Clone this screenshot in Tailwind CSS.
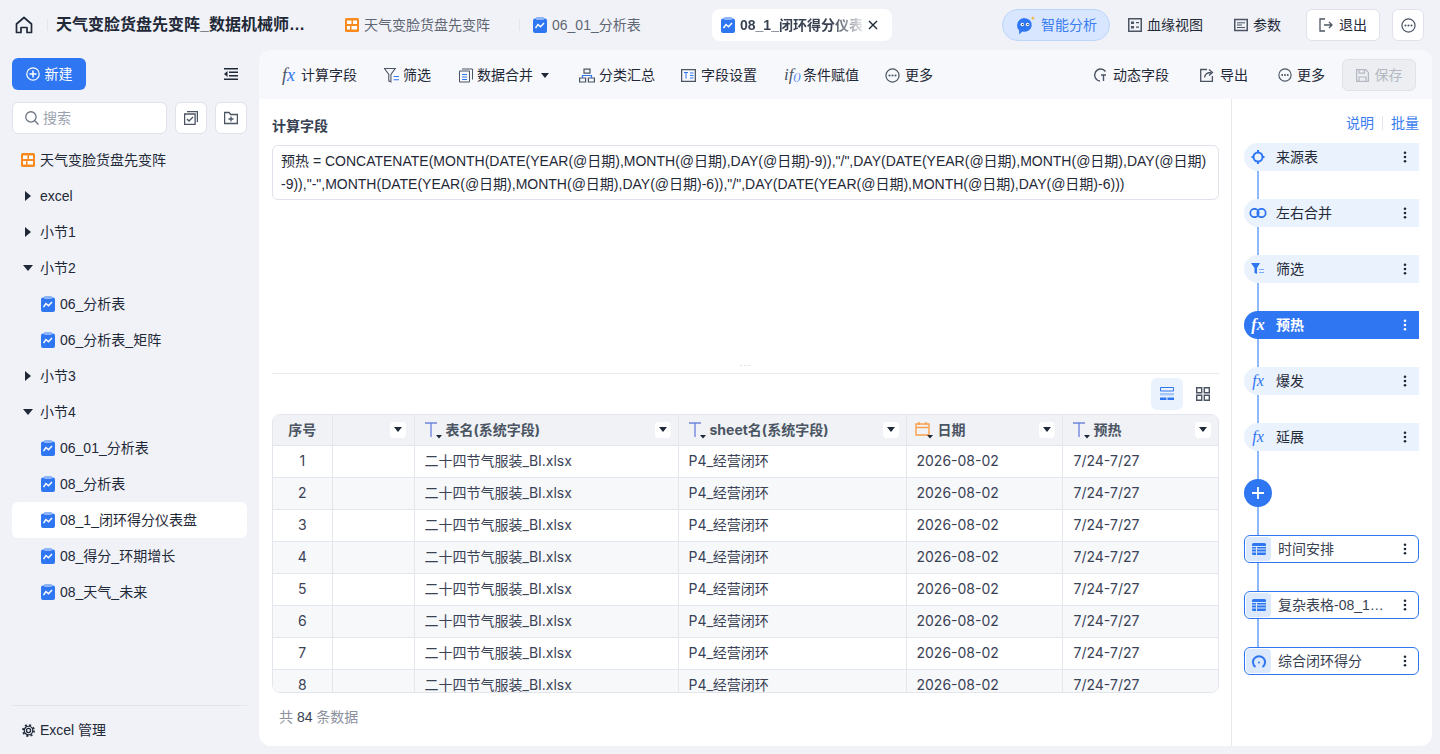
<!DOCTYPE html>
<html lang="zh-CN">
<head>
  <meta charset="UTF-8"/>
  <title>闭环得分仪表盘</title>
  <script src="https://cdn.jsdelivr.net/npm/@tailwindcss/browser@4"></script>
</head>
<body class="h-[754px] w-[1440px] overflow-hidden bg-[#f0f2f8] text-[14px] text-[#1f2937] [font-family:'Liberation_Sans','Noto_Sans_CJK_SC',sans-serif]">

<!-- shared icons -->
<svg class="hidden">
  <symbol id="report" viewBox="0 0 14 16">
    <rect x="0" y="1.500" width="14" height="14.500" rx="2" fill="#2f76f2"/>
    <rect x="3" y="0" width="8" height="3" rx="1" fill="#8db5f7"/>
    <path d="M2.500 11 5 7.500l2.500 2.200L11 6" fill="none" stroke="#fff" stroke-width="1.500"/>
  </symbol>
  <symbol id="dash" viewBox="0 0 14 14">
    <rect width="14" height="14" rx="1.500" fill="#f98a1e"/>
    <path d="M2 2.500h4.500V6H2zM8 2.500h4V6H8zM2 8h3v3.500H2zM6.500 8H12v3.500H6.500z" fill="#fff"/>
  </symbol>
  <symbol id="dots" viewBox="0 0 16 16">
    <circle cx="8" cy="8" r="7" fill="none" stroke="currentColor" stroke-width="1.300"/>
    <circle cx="4.800" cy="8" r="1.100" fill="currentColor"/><circle cx="8" cy="8" r="1.100" fill="currentColor"/><circle cx="11.200" cy="8" r="1.100" fill="currentColor"/>
  </symbol>
  <symbol id="kebab" viewBox="0 0 4 14">
    <circle cx="2" cy="2" r="1.500" fill="currentColor"/><circle cx="2" cy="7" r="1.500" fill="currentColor"/><circle cx="2" cy="12" r="1.500" fill="currentColor"/>
  </symbol>
  <symbol id="sheet" viewBox="0 0 14 12">
    <path d="M0 1.500A1.500 1.500 0 0 1 1.500 0h11A1.500 1.500 0 0 1 14 1.500V3H0zM0 4h4v1.600H0zM5 4h9v1.600H5zM0 6.600h4v1.900H0zM5 6.600h9v1.900H5zM0 9.400h4V12H1.500A1.500 1.500 0 0 1 0 10.500zM5 9.400h9v1.100a1.500 1.500 0 0 1-1.500 1.500H5z" fill="#2f76f2"/>
  </symbol>
  <symbol id="typeT" viewBox="0 0 20 18">
    <path d="M1 2h12M7 2v14" fill="none" stroke="#6f86e0" stroke-width="1.400"/>
    <path d="M12 14h6l-3 3.500z" fill="#1f2937"/>
  </symbol>
</svg>

<!-- top bar -->
<header class="flex h-[50px] items-center">
  <div class="flex w-[47px] justify-center pl-[1px]">
    <svg class="h-[18px] w-[18px] text-[#1f2937]" viewBox="0 0 18 18" fill="none" stroke="currentColor" stroke-width="1.700"><path d="M1.500 8 9 1.500 16.500 8v8.500h-4.500v-5H6v5H1.500z" stroke-linejoin="round"/></svg>
  </div>
  <div class="h-[12px] w-px bg-[#e2e5ee]"></div>
  <h1 class="ml-2 w-[250px] truncate text-[16px] font-bold text-[#1f2937]">天气变脸货盘先变阵_数据机械师分析看板</h1>
  <div class="ml-[39px] flex w-[160px] items-center gap-[5px] text-[#5f6673]">
    <svg class="h-[14px] w-[14px]"><use href="#dash"/></svg><span>天气变脸货盘先变阵</span>
  </div>
  <div class="ml-[14px] h-[12px] w-px bg-[#e2e5ee]"></div>
  <div class="ml-[13px] flex w-[179px] items-center gap-[5px] text-[#5f6673]">
    <svg class="h-[16px] w-[14px]"><use href="#report"/></svg><span>06_01_分析表</span>
  </div>
  <div class="flex h-8 w-[180px] items-center rounded-lg bg-white pl-[9px]">
    <svg class="h-[16px] w-[14px] shrink-0"><use href="#report"/></svg>
    <span class="ml-[5px] w-[122px] overflow-hidden whitespace-nowrap bg-gradient-to-r from-[#374151] from-75% to-[#37415122] bg-clip-text font-bold text-transparent">08_1_闭环得分仪表盘</span>
    <svg class="ml-[6px] h-[10px] w-[10px] text-[#1f2937]" viewBox="0 0 10 10" stroke="currentColor" stroke-width="1.400"><path d="m1 1 8 8M9 1 1 9"/></svg>
  </div>
  <div class="ml-[110px] flex h-8 w-[108px] items-center rounded-full border border-[#bcd5fb] bg-[#d8e7ff] pl-[13px] text-[#3b7cf0]">
    <svg class="h-[20px] w-[20px] shrink-0" viewBox="1 0 19 19"><path d="M2 9.500a7 6.500 0 1 1 5 6.200L4 18.500v-3.700A6.500 6.500 0 0 1 2 9.500z" fill="#2f76f2"/><circle cx="7" cy="9" r="1.700" fill="#fff"/><circle cx="12" cy="9" r="1.700" fill="#fff"/><circle cx="7.300" cy="9" r=".7" fill="#1f2937"/><circle cx="12.300" cy="9" r=".7" fill="#1f2937"/><path d="m17 1 .6 1.400L19 3l-1.400.6L17 5l-.6-1.400L15 3l1.400-.6z" fill="#f9b233"/></svg>
    <span class="ml-[5px]">智能分析</span>
  </div>
  <div class="ml-[18px] flex items-center gap-[5px]">
    <svg class="h-[14px] w-[14px] text-[#4b5563]" viewBox="0 0 14 14"><path d="M.75.750h12.500v12.500H.75z" fill="none" stroke="currentColor" stroke-width="1.500"/><path d="M3 3.500h3v2.500H3zM8 4h3v1.200H8zM3 8h3v2.500H3zM8 8.500h3v1.200H8z" fill="currentColor"/></svg>
    <span>血缘视图</span>
  </div>
  <div class="ml-[31px] flex items-center gap-[5px]">
    <svg class="h-[14px] w-[14px] text-[#4b5563]" viewBox="0 0 14 14"><path d="M.75 1.500h12.500v11H.75z" fill="none" stroke="currentColor" stroke-width="1.500"/><path d="M3 4.800h8M3 7h5M3 9.500h8" stroke="currentColor"/></svg>
    <span>参数</span>
  </div>
  <button class="ml-[25px] flex h-8 w-[74px] items-center justify-center gap-[6px] rounded-md border border-[#dfe2ea] bg-white">
    <svg class="h-[14px] w-[14px] text-[#4b5563]" viewBox="0 0 14 14" fill="none" stroke="currentColor" stroke-width="1.300"><path d="M6 1H1v12h5M5 7h8M10 4l3 3-3 3"/></svg>
    <span>退出</span>
  </button>
  <button class="ml-3 flex h-8 w-8 items-center justify-center rounded-md border border-[#dfe2ea] bg-white text-[#4b5563]">
    <svg class="h-[15px] w-[15px]"><use href="#dots"/></svg>
  </button>
</header>

<div class="flex h-[696px]">
  <!-- tree sidebar -->
  <aside class="flex w-[259px] flex-col px-3 pt-2">
    <div class="flex h-8 items-center justify-between">
      <button class="flex h-8 w-[74px] items-center justify-center gap-[5px] rounded-md bg-[#2f76f2] text-white">
        <svg class="h-[14px] w-[14px]" viewBox="0 0 14 14" fill="none" stroke="currentColor" stroke-width="1.200"><circle cx="7" cy="7" r="6.200"/><path d="M7 3.500v7M3.500 7h7" stroke-width="1.500"/></svg>
        新建
      </button>
      <svg class="mr-[9px] h-[12px] w-[14px] text-[#1f2937]" viewBox="0 0 14 12" fill="currentColor"><path d="M0 0h14v1.500H0zM5 3.500h9V5H5zM5 7h9v1.500H5zM0 10.500h14V12H0zM3.500 3v6L0 6z"/></svg>
    </div>
    <div class="mt-3 flex h-8 gap-2">
      <div class="flex w-[155px] items-center gap-[4px] rounded-md border border-[#dfe2ea] bg-white pl-[12px] text-[#9ca3af]">
        <svg class="h-[14px] w-[14px] text-[#6b7280]" viewBox="0 0 13 13" fill="none" stroke="currentColor" stroke-width="1.200"><circle cx="5.500" cy="5.500" r="4.800"/><path d="m9 9 3.500 3.500"/></svg>
        搜索
      </div>
      <button class="flex h-8 w-8 items-center justify-center rounded-md border border-[#dfe2ea] bg-white text-[#4b5563]">
        <svg class="h-[14px] w-[14px]" viewBox="0 0 14 14" fill="none" stroke="currentColor" stroke-width="1.300"><path d="M.6 3h10.500v10.400H.6zM3 .6h10.400V11"/><path d="m3 8 2 2 4-4"/></svg>
      </button>
      <button class="flex h-8 w-8 items-center justify-center rounded-md border border-[#dfe2ea] bg-white text-[#4b5563]">
        <svg class="h-[14px] w-[14px]" viewBox="0 0 14 14" fill="none" stroke="currentColor" stroke-width="1.300"><path d="M.6 1.500h4.500l1.500 2h6.800v9H.6zM7 5.500v5M4.500 8h5"/></svg>
      </button>
    </div>
    <nav class="mt-2 flex-1">
      <div class="flex h-9 items-center gap-[5px] pl-[9px]"><svg class="h-[14px] w-[14px]"><use href="#dash"/></svg>天气变脸货盘先变阵</div>
      <div class="flex h-9 items-center pl-[13px]"><span class="border-y-[5px] border-l-[6px] border-y-transparent border-l-[#1f2937]"></span><span class="ml-[9px]">excel</span></div>
      <div class="flex h-9 items-center pl-[13px]"><span class="border-y-[5px] border-l-[6px] border-y-transparent border-l-[#1f2937]"></span><span class="ml-[9px]">小节1</span></div>
      <div class="flex h-9 items-center pl-[11px]"><span class="border-x-[5px] border-t-[6px] border-x-transparent border-t-[#1f2937]"></span><span class="ml-[7px]">小节2</span></div>
      <div class="flex h-9 items-center gap-[5px] pl-[29px]"><svg class="h-[16px] w-[14px]"><use href="#report"/></svg>06_分析表</div>
      <div class="flex h-9 items-center gap-[5px] pl-[29px]"><svg class="h-[16px] w-[14px]"><use href="#report"/></svg>06_分析表_矩阵</div>
      <div class="flex h-9 items-center pl-[13px]"><span class="border-y-[5px] border-l-[6px] border-y-transparent border-l-[#1f2937]"></span><span class="ml-[9px]">小节3</span></div>
      <div class="flex h-9 items-center pl-[11px]"><span class="border-x-[5px] border-t-[6px] border-x-transparent border-t-[#1f2937]"></span><span class="ml-[7px]">小节4</span></div>
      <div class="flex h-9 items-center gap-[5px] pl-[29px]"><svg class="h-[16px] w-[14px]"><use href="#report"/></svg>06_01_分析表</div>
      <div class="flex h-9 items-center gap-[5px] pl-[29px]"><svg class="h-[16px] w-[14px]"><use href="#report"/></svg>08_分析表</div>
      <div class="flex h-9 items-center gap-[5px] rounded-md bg-white pl-[29px]"><svg class="h-[16px] w-[14px]"><use href="#report"/></svg>08_1_闭环得分仪表盘</div>
      <div class="flex h-9 items-center gap-[5px] pl-[29px]"><svg class="h-[16px] w-[14px]"><use href="#report"/></svg>08_得分_环期增长</div>
      <div class="flex h-9 items-center gap-[5px] pl-[29px]"><svg class="h-[16px] w-[14px]"><use href="#report"/></svg>08_天气_未来</div>
    </nav>
    <div class="mb-[-9px] flex h-[50px] shrink-0 items-center gap-[5px] border-t border-[#e2e5ee] pl-[10px]">
      <svg class="h-[13px] w-[13px] text-[#1f2937]" viewBox="0 0 14 14" fill="none" stroke="currentColor"><circle cx="7" cy="7" r="2.200" stroke-width="1.400"/><circle cx="7" cy="7" r="4.600" stroke-width="1.300"/><circle cx="7" cy="7" r="6" stroke-width="1.800" stroke-dasharray="2.200 2.510"/></svg>
      Excel 管理
    </div>
  </aside>

  <!-- main card -->
  <main class="flex h-[696px] w-[1173px] flex-col overflow-hidden rounded-xl bg-white">
    <div class="flex h-[49px] shrink-0 items-center bg-[#f7f8fc] pt-[1px] pl-[23px] pr-[16px]">
      <div class="flex items-center gap-[4px]"><span class="w-[15px] whitespace-nowrap text-[18px] leading-[20px] italic text-[#4b5563] [font-family:'Liberation_Serif',serif]">f<span class="text-[#2f76f2]">x</span></span>计算字段</div>
      <div class="ml-[27px] flex items-center gap-[3px]">
        <svg class="h-[15px] w-[16px] text-[#4b5563]" viewBox="0 0 15 14" fill="none" stroke="currentColor"><path d="M.5.500h10L6.500 6v7l-2-1V6z"/><path d="M9 8h5M9 11h5" stroke="#2f76f2"/></svg>筛选
      </div>
      <div class="ml-[28px] flex items-center gap-[4px]">
        <svg class="h-[15px] w-[14px] text-[#4b5563]" viewBox="0 0 14 14" fill="none" stroke="currentColor"><path d="M.5 2.500h10v11H.5zM3 .5h10.500V11"/><path d="M3 6h5M3 8.500h5M3 11h5" stroke="#2f76f2"/></svg>数据合并
        <span class="ml-[4px] border-x-[4px] border-t-[5px] border-x-transparent border-t-[#1f2937]"></span>
      </div>
      <div class="ml-[30px] flex items-center gap-[4px]">
        <svg class="h-[15px] w-[16px] text-[#4b5563]" viewBox="0 0 16 14" fill="none" stroke="currentColor" stroke-width="1.200"><path d="M5 .6h6v4H5zM.6 9.500h6v4h-6zM9.400 9.500h6v4h-6z"/><path d="M3.500 9.500V7h9v2.500" stroke="#2f76f2"/></svg>分类汇总
      </div>
      <div class="ml-[26px] flex items-center gap-[5px]">
        <svg class="h-[13px] w-[15px] text-[#4b5563]" viewBox="0 0 15 13" fill="none" stroke="currentColor" stroke-width="1.300"><path d="M.6.600h13.800v11.800H.6z"/><path d="M3 3.500h4M5 3.500v6M9 4h3.500M9 6.500h3.500M9 9h3.500" stroke="#2f76f2" stroke-width="1"/></svg>字段设置
      </div>
      <div class="ml-[27px] flex items-center gap-[4px]"><span class="w-[15px] whitespace-nowrap text-[17px] leading-[20px] italic text-[#4b5563] [font-family:'Liberation_Serif',serif]">if<span class="text-[11px] text-[#2f76f2]">()</span></span>条件赋值</div>
      <div class="ml-[26px] flex items-center gap-[5px]"><svg class="h-[15px] w-[15px] text-[#4b5563]"><use href="#dots"/></svg>更多</div>
      <div class="ml-auto flex items-center gap-[6px]">
        <svg class="h-[14px] w-[14px] text-[#4b5563]" viewBox="0 0 14 14" fill="none" stroke="currentColor" stroke-width="1.400"><path d="M12.500 3.500A6 6 0 1 0 7 13M8 7h5M10.500 7v6"/></svg>动态字段
      </div>
      <div class="ml-[31px] flex items-center gap-[6px]">
        <svg class="h-[14px] w-[14px] text-[#4b5563]" viewBox="0 0 14 14" fill="none" stroke="currentColor" stroke-width="1.300"><path d="M7 1.500H.7v11.800h11.700V8"/><path d="M4.500 9.500C5 6 7.500 4.500 11 4.500M9 1.500l3.500 3-3.500 3"/></svg>导出
      </div>
      <div class="ml-[30px] flex items-center gap-[5px]"><svg class="h-[14px] w-[14px] text-[#4b5563]"><use href="#dots"/></svg>更多</div>
      <button class="ml-[17px] flex h-8 w-[74px] items-center justify-center gap-[6px] rounded-md border border-[#dfe2ea] bg-[#eceef2] text-[#b3b8c2]">
        <svg class="h-[13px] w-[13px]" viewBox="0 0 13 13" fill="none" stroke="currentColor" stroke-width="1.200"><path d="M.6.600h9l2.800 2.800v9H.6z"/><path d="M3 .6v3.500h5.500V.6M3 12.400V8h7v4.400"/></svg>保存
      </button>
    </div>

    <div class="flex min-h-0 flex-1">
      <section class="flex w-[972px] shrink-0 flex-col pl-[13px] pr-[12px]">
        <div class="mt-[18px] h-[18px] leading-[18px] font-bold text-[#374151]">计算字段</div>
        <div class="mt-[10px] h-[55px] rounded-md border border-[#dfe2ea] px-2 pt-[4px] leading-[23px] break-all text-[#1f2937]">预热 = CONCATENATE(MONTH(DATE(YEAR(@日期),MONTH(@日期),DAY(@日期)-9)),"/",DAY(DATE(YEAR(@日期),MONTH(@日期),DAY(@日期)-9)),"-",MONTH(DATE(YEAR(@日期),MONTH(@日期),DAY(@日期)-6)),"/",DAY(DATE(YEAR(@日期),MONTH(@日期),DAY(@日期)-6)))</div>
        <div class="flex h-[173px] items-end justify-center pb-[3px] text-[9px] leading-[9px] tracking-[1px] text-[#b9bec9]">···</div>
        <div class="flex h-[41px] items-start justify-end gap-1 border-t border-[#e7e9ef] pt-1">
          <button class="flex h-8 w-8 items-center justify-center rounded-md bg-[#eaf2fe]">
            <svg class="h-[14px] w-[14px]" viewBox="0 0 14 14"><path d="M.5.500h13v3.500H.5z" fill="none" stroke="#2f76f2"/><path d="M0 6h14v2.500H0z" fill="#a9c8fa"/><path d="M0 10.500h6.500V13H0zM7.500 10.500H14V13H7.500z" fill="#2f76f2"/></svg>
          </button>
          <button class="flex h-8 w-8 items-center justify-center">
            <svg class="h-[14px] w-[14px] text-[#4b5563]" viewBox="0 0 14 14" fill="none" stroke="currentColor" stroke-width="1.400"><path d="M.7.700h5v5h-5zM8.300.7h5v5h-5zM.7 8.300h5v5h-5zM8.300 8.300h5v5h-5z"/></svg>
          </button>
        </div>
        <div class="h-[279px] shrink-0 overflow-hidden rounded-lg border border-[#e3e6ed] [font-family:'Inter','Noto_Sans_CJK_SC',sans-serif]">
          <table class="w-full table-fixed border-collapse text-[14px] text-[#3a4256]">
            <colgroup><col class="w-[59px]"/><col class="w-[82px]"/><col class="w-[264px]"/><col class="w-[228px]"/><col class="w-[156px]"/><col/></colgroup>
            <thead>
              <tr class="h-[30px] bg-[#f0f2f6] text-[#4b5563]">
                <th class="border-r border-b border-[#e3e6ed] font-bold">序号</th>
                <th class="border-r border-b border-[#e3e6ed]"><div class="flex justify-end pr-[8px]"><span class="flex h-4 w-4 items-center justify-center rounded-sm bg-white"><i class="border-x-[4px] border-t-[5px] border-x-transparent border-t-[#1f2937]"></i></span></div></th>
                <th class="border-r border-b border-[#e3e6ed] font-bold"><div class="flex items-center pl-[9px] pr-[7px]"><svg class="mr-[2px] h-[18px] w-[20px]"><use href="#typeT"/></svg>表名(系统字段)<span class="ml-auto flex h-4 w-4 items-center justify-center rounded-sm bg-white"><i class="border-x-[4px] border-t-[5px] border-x-transparent border-t-[#1f2937]"></i></span></div></th>
                <th class="border-r border-b border-[#e3e6ed] font-bold"><div class="flex items-center pl-[9px] pr-[7px]"><svg class="mr-[2px] h-[18px] w-[20px]"><use href="#typeT"/></svg>sheet名(系统字段)<span class="ml-auto flex h-4 w-4 items-center justify-center rounded-sm bg-white"><i class="border-x-[4px] border-t-[5px] border-x-transparent border-t-[#1f2937]"></i></span></div></th>
                <th class="border-r border-b border-[#e3e6ed] font-bold"><div class="flex items-center pl-[8px] pr-[7px]"><svg class="mr-[3px] h-[18px] w-[20px]" viewBox="0 0 20 18"><path d="M1 3h13v11H1zM1 6.500h13M4 1v3M11 1v3" fill="none" stroke="#f9a04b" stroke-width="1.400"/><path d="M12 14h6l-3 3.500z" fill="#1f2937"/></svg>日期<span class="ml-auto flex h-4 w-4 items-center justify-center rounded-sm bg-white"><i class="border-x-[4px] border-t-[5px] border-x-transparent border-t-[#1f2937]"></i></span></div></th>
                <th class="border-b border-[#e3e6ed] font-bold"><div class="flex items-center pl-[9px] pr-[7px]"><svg class="mr-[2px] h-[18px] w-[20px]"><use href="#typeT"/></svg>预热<span class="ml-auto flex h-4 w-4 items-center justify-center rounded-sm bg-white"><i class="border-x-[4px] border-t-[5px] border-x-transparent border-t-[#1f2937]"></i></span></div></th>
              </tr>
            </thead>
            <tbody id="rows"></tbody>
          </table>
        </div>
        <div class="mt-[14px] pl-[7px] text-[#8b919e]">共 <span class="text-[#374151]">84</span> 条数据</div>
      </section>

      <!-- pipeline -->
      <section class="relative w-[201px] min-w-0 shrink-0 border-l border-[#e7e9ef] pl-3 pr-[13px]">
        <div class="absolute top-[58px] bottom-[85px] left-[25px] w-[2px] bg-[#8fb8fa]"></div>
        <div class="flex h-[44px] items-center justify-end pt-[4px] text-[#3b7cf0]">说明<span class="mx-2 h-[14px] w-px bg-[#e2e5ee]"></span>批量</div>
        <div id="steps" class="relative flex flex-col gap-[28px]"></div>
      </section>
    </div>
  </main>
</div>

<script>
  // table body
  const rows = document.getElementById("rows");
  for (let i = 1; i <= 8; i++) {
    const tr = document.createElement("tr");
    tr.className = "h-[32px] " + (i % 2 === 0 ? "bg-[#f7f8fa]" : "bg-white");
    tr.innerHTML = `
      <td class="border-r border-b border-[#e3e6ed] pb-[2px] text-center">${i}</td>
      <td class="border-r border-b border-[#e3e6ed]"></td>
      <td class="border-r border-b border-[#e3e6ed] pb-[2px] pl-[10px]">二十四节气服装_BI.xlsx</td>
      <td class="border-r border-b border-[#e3e6ed] pb-[2px] pl-[10px]">P4_经营闭环</td>
      <td class="border-r border-b border-[#e3e6ed] pb-[2px] pl-[10px]">2026-08-02</td>
      <td class="border-b border-[#e3e6ed] pb-[2px] pl-[11px]">7/24-7/27</td>`;
    rows.appendChild(tr);
  }

  // pipeline nodes
  const fx = c => `<span class="w-[18px] text-center text-[16px] italic [font-family:'Liberation_Serif',serif] ${c}">fx</span>`;
  const ops = [
    ["来源表", `<svg class="h-[14px] w-[18px]" viewBox="0 0 18 14" fill="none" stroke="#2f76f2" stroke-width="2"><circle cx="9" cy="7" r="4.500"/><path d="M9 0v2M9 12v2M2.500 7h2M13.500 7h2"/></svg>`],
    ["左右合并", `<svg class="h-[10px] w-[18px]" viewBox="0 0 18 10" fill="none" stroke="#2f76f2" stroke-width="1.800"><circle cx="5.500" cy="5" r="4.200"/><circle cx="12.500" cy="5" r="4.200"/></svg>`],
    ["筛选", `<svg class="h-[12px] w-[18px]" viewBox="0 0 18 12"><path d="M2 0h9L8 5v6L5.500 10V5z" fill="#2f76f2"/><path d="M10 6.500h5M10 9.500h5" stroke="#7fabf6" stroke-width="1.200"/></svg>`],
    ["预热", fx("text-white"), true],
    ["爆发", fx("text-[#2f76f2]")],
    ["延展", fx("text-[#2f76f2]")],
  ];
  const outs = [
    ["时间安排", `<svg class="h-[12px] w-[14px]"><use href="#sheet"/></svg>`],
    ["复杂表格-08_1_闭环得分", `<svg class="h-[12px] w-[14px]"><use href="#sheet"/></svg>`],
    ["综合闭环得分", `<svg class="h-[13px] w-[14px]" viewBox="0 0 14 13" fill="none" stroke="#2f76f2" stroke-width="2"><path d="M3.500 12A6 6 0 1 1 10.500 12"/><circle cx="7" cy="7.500" r="1" fill="#2f76f2" stroke="none"/></svg>`],
  ];
  const steps = document.getElementById("steps");
  let html = "";
  ops.forEach(([name, icon, active]) => {
    html += `<div class="flex h-[28px] items-center rounded-l-full rounded-r-md pl-[5px] pr-[12px] ${active ? "bg-[#2f76f2] font-bold text-white" : "bg-[#eaf2fd] text-[#1f2937]"}">
      ${icon}<span class="ml-[9px] flex-1">${name}</span>
      <svg class="h-[12px] w-[4px]"><use href="#kebab"/></svg></div>`;
  });
  html += `<div class="flex h-[28px] w-[28px] items-center justify-center rounded-full bg-[#2f76f2]"><svg class="h-[12px] w-[12px]" viewBox="0 0 12 12" stroke="#fff" stroke-width="1.800"><path d="M6 0v12M0 6h12"/></svg></div>`;
  outs.forEach(([name, icon]) => {
    html += `<div class="flex h-[28px] items-center rounded-md border border-[#2f76f2] bg-white p-[1px] pr-[11px]">
      <span class="flex h-[24px] w-[25px] shrink-0 items-center justify-center rounded-[4px] bg-[#dce9fd]">${icon}</span>
      <span class="ml-[7px] min-w-0 flex-1 truncate text-[#374151]">${name}</span>
      <svg class="ml-[12px] h-[12px] w-[4px] shrink-0"><use href="#kebab"/></svg></div>`;
  });
  steps.innerHTML = html;
</script>
</body>
</html>
